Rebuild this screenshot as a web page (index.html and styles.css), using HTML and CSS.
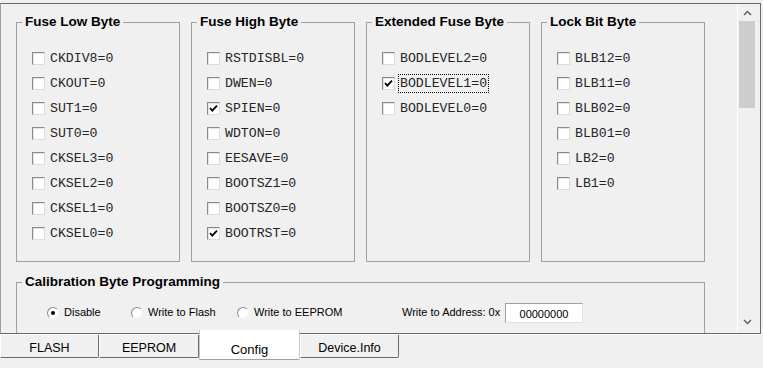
FILE: index.html
```html
<!DOCTYPE html>
<html lang="en">
<head>
  <meta charset="UTF-8">
  <title>Config</title>
  <link rel="stylesheet" href="styles.css">
</head>
<body>
  <div class="window">
    <div class="frame">
      <div class="page">
        <div class="fuse-row">
          <fieldset class="group">
            <legend>Fuse Low Byte</legend>
            <ul class="bits">
              <li><span class="check"></span><span class="bit">CKDIV8=0</span></li>
              <li><span class="check"></span><span class="bit">CKOUT=0</span></li>
              <li><span class="check"></span><span class="bit">SUT1=0</span></li>
              <li><span class="check"></span><span class="bit">SUT0=0</span></li>
              <li><span class="check"></span><span class="bit">CKSEL3=0</span></li>
              <li><span class="check"></span><span class="bit">CKSEL2=0</span></li>
              <li><span class="check"></span><span class="bit">CKSEL1=0</span></li>
              <li><span class="check"></span><span class="bit">CKSEL0=0</span></li>
            </ul>
          </fieldset>
          <fieldset class="group">
            <legend>Fuse High Byte</legend>
            <ul class="bits">
              <li><span class="check"></span><span class="bit">RSTDISBL=0</span></li>
              <li><span class="check"></span><span class="bit">DWEN=0</span></li>
              <li><span class="check on"><svg width="11" height="11" viewBox="0 0 11 11"><path d="M2 5 L4.3 7.6 L9 2.6" fill="none" stroke="#000" stroke-width="1.8"/></svg></span><span class="bit">SPIEN=0</span></li>
              <li><span class="check"></span><span class="bit">WDTON=0</span></li>
              <li><span class="check"></span><span class="bit">EESAVE=0</span></li>
              <li><span class="check"></span><span class="bit">BOOTSZ1=0</span></li>
              <li><span class="check"></span><span class="bit">BOOTSZ0=0</span></li>
              <li><span class="check on"><svg width="11" height="11" viewBox="0 0 11 11"><path d="M2 5 L4.3 7.6 L9 2.6" fill="none" stroke="#000" stroke-width="1.8"/></svg></span><span class="bit">BOOTRST=0</span></li>
            </ul>
          </fieldset>
          <fieldset class="group">
            <legend>Extended Fuse Byte</legend>
            <ul class="bits">
              <li><span class="check"></span><span class="bit">BODLEVEL2=0</span></li>
              <li><span class="check on"><svg width="11" height="11" viewBox="0 0 11 11"><path d="M2 5 L4.3 7.6 L9 2.6" fill="none" stroke="#000" stroke-width="1.8"/></svg></span><span class="bit focus">BODLEVEL1=0</span></li>
              <li><span class="check"></span><span class="bit">BODLEVEL0=0</span></li>
            </ul>
          </fieldset>
          <fieldset class="group">
            <legend>Lock Bit Byte</legend>
            <ul class="bits">
              <li><span class="check"></span><span class="bit">BLB12=0</span></li>
              <li><span class="check"></span><span class="bit">BLB11=0</span></li>
              <li><span class="check"></span><span class="bit">BLB02=0</span></li>
              <li><span class="check"></span><span class="bit">BLB01=0</span></li>
              <li><span class="check"></span><span class="bit">LB2=0</span></li>
              <li><span class="check"></span><span class="bit">LB1=0</span></li>
            </ul>
          </fieldset>
        </div>
        <fieldset class="group calib">
          <legend>Calibration Byte Programming</legend>
          <div class="calib-row">
            <span class="opt opt-disable"><span class="radio on"></span><span class="txt">Disable</span></span>
            <span class="opt opt-flash"><span class="radio"></span><span class="txt">Write to Flash</span></span>
            <span class="opt opt-eeprom"><span class="radio"></span><span class="txt">Write to EEPROM</span></span>
            <span class="addr-label">Write to Address: 0x</span>
            <span class="addr-box">00000000</span>
          </div>
        </fieldset>
      </div>
      <div class="scrollbar">
        <div class="arrow"><svg width="9" height="6" viewBox="0 0 9 6"><path d="M1 5 L4.5 1.5 L8 5" fill="none" stroke="#606060" stroke-width="1.5"/></svg></div>
        <div class="thumb"></div>
        <div class="track"></div>
        <div class="arrow down"><svg width="9" height="6" viewBox="0 0 9 6"><path d="M1 1 L4.5 4.5 L8 1" fill="none" stroke="#606060" stroke-width="1.5"/></svg></div>
      </div>
    </div>
    <div class="tabs">
      <div class="tab tab-flash">FLASH</div>
      <div class="tab tab-eeprom">EEPROM</div>
      <div class="tab tab-config active">Config</div>
      <div class="tab tab-info">Device.Info</div>
    </div>
  </div>
</body>
</html>
```

FILE: styles.css
```css
* {
  box-sizing: border-box;
}
body {
  margin: 0;
  background: #f0f0f0;
  font-family: "Liberation Sans", Arial, sans-serif;
  overflow: hidden;
}
.window {
  width: 763px;
  height: 368px;
}
.frame {
  display: flex;
  height: 331px;
  margin: 3px 2px 0 0;
  border: 1px solid #696969;
  border-left-color: #a0a0a0;
  position: relative;
}
.page {
  flex: 1;
  overflow: hidden;
  padding: 10px 0 0 15px;
}
.fuse-row {
  display: flex;
  gap: 11px;
}
.group {
  width: 164px;
  margin: 0;
  padding: 0 0 15px 0;
  border: 1px solid #a0a0a0;
  min-inline-size: 0;
}
.group legend {
  margin-left: 5px;
  padding: 0 3px;
  font: bold 13.5px/16px "Liberation Sans", Arial, sans-serif;
  color: #000;
}
.bits {
  list-style: none;
  margin: 0;
  padding: 16px 0 0 15px;
}
.bits li {
  height: 25px;
  display: flex;
  align-items: center;
}
.check {
  width: 13px;
  height: 13px;
  flex-shrink: 0;
  margin-right: 5px;
  background: #fff;
  border: 1px solid;
  border-color: #8a8a8a #dcdcdc #dcdcdc #8a8a8a;
  box-shadow: inset 1px 1px 0 #e4e4e4;
  display: flex;
}
.check svg {
  display: block;
}
.bit {
  font: 13.2px/16px "Liberation Mono", "Courier New", monospace;
  color: #262626;
}
.bit.focus {
  outline: 1px dotted #000;
  outline-offset: 0;
  margin-left: -1px;
  padding: 1px 1px 0;
}

.calib {
  width: 689px;
  margin-top: 12px;
  padding: 0 0 40px 0;
}
.calib-row {
  display: flex;
  align-items: center;
  height: 33px;
  padding: 13px 0 0 30px;
  font-size: 11px;
  color: #000;
}
.opt {
  display: flex;
  align-items: center;
}
.opt-disable {
  width: 84px;
}
.opt-flash {
  width: 106px;
}
.opt-eeprom {
  width: 165px;
}
.txt,
.addr-label {
  padding-bottom: 3px;
}
.radio {
  width: 12px;
  height: 12px;
  flex-shrink: 0;
  margin-right: 5px;
  border-radius: 50%;
  background: #fff;
  border: 1px solid;
  border-color: #8a8a8a #f4f4f4 #f4f4f4 #8a8a8a;
  display: flex;
  align-items: center;
  justify-content: center;
}
.radio.on::after {
  content: "";
  width: 4px;
  height: 4px;
  border-radius: 50%;
  background: #000;
}
.addr-label {
  width: 103px;
}
.addr-box {
  width: 78px;
  height: 20px;
  background: #fff;
  border: 1px solid;
  border-color: #a0a0a0 #e3e3e3 #e3e3e3 #a0a0a0;
  text-align: center;
  line-height: 20px;
}

.scrollbar {
  width: 18px;
  margin-right: 5px;
  display: flex;
  flex-direction: column;
  border-left: 1px solid #fff;
}
.arrow {
  height: 17px;
  display: flex;
  align-items: center;
  justify-content: center;
  padding-left: 1px;
}
.arrow.down {
  margin-bottom: 3px;
}
.thumb {
  height: 87px;
  margin-left: 1px;
  background: #cdcdcd;
}
.track {
  flex: 1;
}

.tabs {
  display: flex;
  height: 34px;
  border-top: 1px solid #fff;
}
.tab {
  height: 23px;
  background: #f0f0f0;
  border-left: 1px solid #fff;
  border-right: 1px solid #696969;
  border-bottom: 1px solid #696969;
  border-bottom-right-radius: 2px;
  font-size: 12.5px;
  line-height: 22px;
  padding-top: 2px;
  text-align: center;
  color: #000;
}
.tab-flash {
  width: 99px;
}
.tab-eeprom {
  width: 100px;
}
.tab-config {
  width: 101px;
}
.tab-info {
  width: 99px;
}
.tab.active {
  position: relative;
  margin-top: -5px;
  height: 30px;
  background: #fff;
  border-left: 1px solid #c8c8c8;
  border-right: 1px solid #c8c8c8;
  border-bottom: 1px solid #a0a0a0;
  padding-top: 10px;
  line-height: 20px;
  font-size: 13px;
}
```
